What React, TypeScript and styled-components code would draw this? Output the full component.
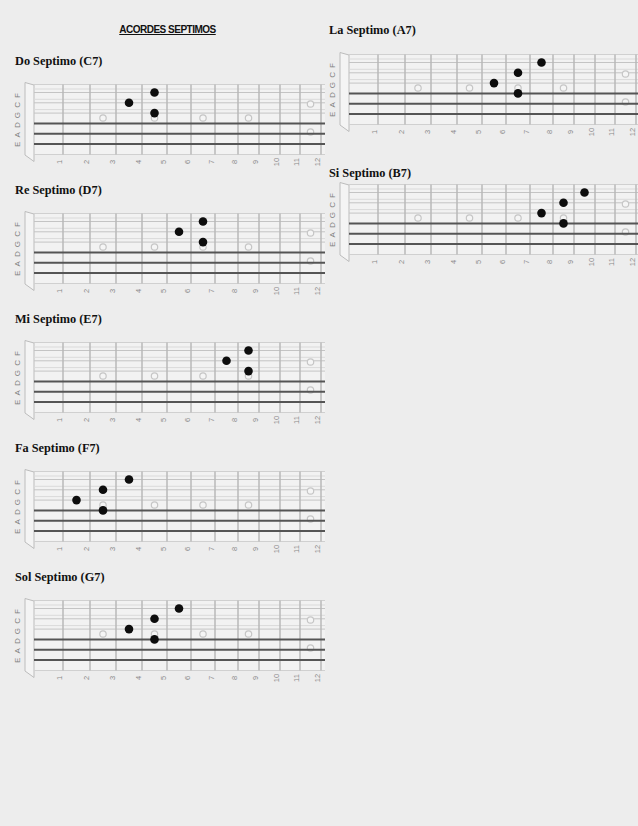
import React, { FC } from "react";
import styled, { createGlobalStyle } from "styled-components";

const GlobalStyle = createGlobalStyle`
  html, body {
    margin: 0;
    padding: 0;
    background: #ededed;
  }
  body {
    width: 638px;
    height: 826px;
    overflow: hidden;
  }
`;

// fret line x positions (local svg coords), nut edge at 24
const FRETS = [53, 80, 106, 132, 157, 181, 205, 228, 249, 270, 290, 311];
const NUT_X = 24;
const STRINGS = [14.5, 24.8, 35.1, 45.4, 55.7, 66]; // F C G D A E
const TOP = 6.5;
const BOTTOM = 76.5;
const RIGHT = 318;

const fretCenter = (fret: number) => {
  const left = fret === 1 ? NUT_X : FRETS[fret - 2];
  return (left + FRETS[fret - 1]) / 2;
};

type TDot = [number, number]; // [fret, string index 0=F .. 5=E]

type TChord = {
  title: string;
  dots: TDot[];
  titleGap: number;
  boardGap: number;
};

const LEFT_CHORDS: TChord[] = [
  { title: "Do Septimo (C7)", dots: [[5, 0], [4, 1], [5, 2]], titleGap: 18, boardGap: 10 },
  { title: "Re Septimo (D7)", dots: [[7, 0], [6, 1], [7, 2]], titleGap: 14, boardGap: 10 },
  { title: "Mi Septimo (E7)", dots: [[9, 0], [8, 1], [9, 2]], titleGap: 14, boardGap: 10 },
  { title: "Fa Septimo (F7)", dots: [[4, 0], [3, 1], [2, 2], [3, 3]], titleGap: 14, boardGap: 10 },
  { title: "Sol Septimo (G7)", dots: [[6, 0], [5, 1], [4, 2], [5, 3]], titleGap: 14, boardGap: 10 },
];

const RIGHT_CHORDS: TChord[] = [
  { title: "La Septimo (A7)", dots: [[8, 0], [7, 1], [6, 2], [7, 3]], titleGap: 0, boardGap: 11 },
  { title: "Si Septimo (B7)", dots: [[10, 0], [9, 1], [8, 2], [9, 3]], titleGap: 27, boardGap: -2 },
];

const Fretboard: FC<{ dots: TDot[]; gap: number }> = ({ dots, gap }) => (
  <Board $gap={gap} width={315} height={91} viewBox="0 0 315 91">
    <text
      x={7.5}
      y={42}
      transform="rotate(-90 7.5 42)"
      textAnchor="middle"
      dominantBaseline="central"
      fontSize={8}
      fill="#7e7e7e"
      textLength={54}
      lengthAdjust="spacing"
    >
      EADGCF
    </text>
    <rect x={NUT_X} y={TOP} width={RIGHT - NUT_X} height={BOTTOM - TOP} fill="#f2f2f2" />
    <polygon points="15,4.5 24,7 24,83.5 15,77" fill="#f4f4f4" stroke="#bcbcbc" strokeWidth={1} />
    <line x1={NUT_X} x2={RIGHT} y1={TOP} y2={TOP} stroke="#d0d0d0" strokeWidth={1} />
    <line x1={NUT_X} x2={RIGHT} y1={BOTTOM} y2={BOTTOM} stroke="#d0d0d0" strokeWidth={1} />
    {STRINGS.slice(0, 3).map((y) => (
      <g key={y}>
        <line x1={NUT_X} x2={RIGHT} y1={y - 3.5} y2={y - 3.5} stroke="#dadada" strokeWidth={1} />
        <line x1={NUT_X} x2={RIGHT} y1={y} y2={y} stroke="#c4c4c4" strokeWidth={1} />
      </g>
    ))}
    {FRETS.map((x) => (
      <line key={x} x1={x} x2={x} y1={TOP} y2={BOTTOM} stroke="#b8b8b8" strokeWidth={1.5} />
    ))}
    {[3, 5, 7, 9].map((f) => (
      <Marker key={f} cx={fretCenter(f)} cy={40} r={3.2} />
    ))}
    <Marker cx={fretCenter(12)} cy={26} r={3.2} />
    <Marker cx={fretCenter(12)} cy={54} r={3.2} />
    {STRINGS.slice(3).map((y) => (
      <line key={y} x1={NUT_X} x2={RIGHT} y1={y} y2={y} stroke="#555" strokeWidth={2} />
    ))}
    {dots.map(([f, s]) => (
      <circle key={`${f}-${s}`} cx={fretCenter(f)} cy={STRINGS[s]} r={4.3} fill="#0d0d0d" />
    ))}
    {FRETS.map((x, i) => (
      <text
        key={x}
        x={x - 4}
        y={84}
        transform={`rotate(-90 ${x - 4} 84)`}
        textAnchor="middle"
        dominantBaseline="central"
        fontSize={7.5}
        fill="#8a8a8a"
      >
        {i + 1}
      </text>
    ))}
  </Board>
);

const App: FC = () => (
  <>
    <GlobalStyle />
    <Page>
      <LeftColumn>
        <PageTitle>ACORDES SEPTIMOS</PageTitle>
        {LEFT_CHORDS.map((c) => (
          <React.Fragment key={c.title}>
            <ChordTitle $gap={c.titleGap}>{c.title}</ChordTitle>
            <Fretboard dots={c.dots} gap={c.boardGap} />
          </React.Fragment>
        ))}
      </LeftColumn>
      <RightColumn>
        {RIGHT_CHORDS.map((c) => (
          <React.Fragment key={c.title}>
            <ChordTitle $gap={c.titleGap} $indent={4}>
              {c.title}
            </ChordTitle>
            <Fretboard dots={c.dots} gap={c.boardGap} />
          </React.Fragment>
        ))}
      </RightColumn>
    </Page>
  </>
);

export default App;

const Page = styled.div`
  display: grid;
  grid-template-columns: 325px 313px;
  width: 638px;
  height: 826px;
  background: #ededed;
`;

const LeftColumn = styled.div`
  display: flex;
  flex-direction: column;
  align-items: flex-start;
  padding: 24px 0 0 10px;
`;

const RightColumn = styled.div`
  display: flex;
  flex-direction: column;
  align-items: flex-start;
  padding-top: 23px;
  overflow: hidden;
`;

const PageTitle = styled.div`
  align-self: stretch;
  text-align: center;
  font-family: "Liberation Sans", Arial, sans-serif;
  font-weight: bold;
  font-size: 10px;
  line-height: 12px;
  letter-spacing: -0.5px;
  color: #111;
  text-decoration: underline;
`;

const ChordTitle = styled.div<{ $gap: number; $indent?: number }>`
  margin-top: ${(p) => p.$gap}px;
  margin-left: ${(p) => p.$indent ?? 5}px;
  font-family: "Liberation Serif", "Times New Roman", serif;
  font-weight: bold;
  font-size: 12.3px;
  line-height: 14px;
  color: #111;
  white-space: nowrap;
`;

const Board = styled.svg<{ $gap: number }>`
  display: block;
  flex: none;
  margin-top: ${(p) => p.$gap}px;
  font-family: "Liberation Sans", Arial, sans-serif;
`;

const Marker = styled.circle`
  fill: #f5f5f5;
  stroke: #c6c6c6;
  stroke-width: 1.2;
`;
